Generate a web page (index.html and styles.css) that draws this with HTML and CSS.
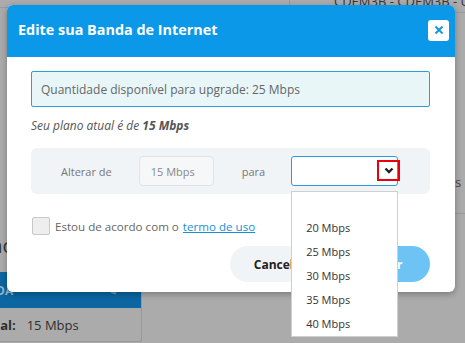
FILE: index.html
```html
<!DOCTYPE html>
<html lang="pt-BR">

<head>
    <meta charset="UTF-8">
    <meta name="viewport" content="width=device-width, initial-scale=1.0">
    <title>Banda de Internet</title>
    <link rel="stylesheet" href="styles.css">
</head>

<body>
    <div class="page">
        <div class="topo">
            <div class="topo-esq"></div>
            <div class="topo-dir">CDEM3B - CDEM3B - Universidade</div>
        </div>
        <div class="meio">
            <div class="coluna">
                <div class="titulo-fundo">Plano</div>
                <div class="card">
                    <div class="card-barra">
                        <span>BANDA</span>
                        <span class="lapis">&#9998;</span>
                    </div>
                    <div class="card-linha"><b>Atual:</b><span class="valor">15 Mbps</span></div>
                </div>
            </div>
            <div class="lado">
                <div class="lado-texto">s r</div>
                <div class="lado-linha"></div>
            </div>
        </div>
    </div>

    <div class="modal">
        <div class="modal-topo">
            <h1>Edite sua Banda de Internet</h1>
            <button class="fechar">
                <svg width="10" height="10" viewBox="0 0 10 10">
                    <path d="M1.5 1.5 L8.5 8.5 M8.5 1.5 L1.5 8.5" stroke="#1596e2" stroke-width="2" />
                </svg>
            </button>
        </div>
        <div class="modal-corpo">
            <div class="aviso">Quantidade disponível para upgrade: 25 Mbps</div>
            <p class="plano">Seu plano atual é de <b>15 Mbps</b></p>

            <div class="alterar">
                <span class="rotulo">Alterar de</span>
                <div class="campo">15 Mbps</div>
                <span class="rotulo para">para</span>
                <div class="seletor">
                    <span class="seta">
                        <svg width="10" height="7" viewBox="0 0 10 7">
                            <path d="M1.5 1.5 L5 5 L8.5 1.5" stroke="#222" stroke-width="2.4" fill="none" />
                        </svg>
                    </span>
                    <ul class="opcoes">
                        <li></li>
                        <li>20 Mbps</li>
                        <li>25 Mbps</li>
                        <li>30 Mbps</li>
                        <li>35 Mbps</li>
                        <li>40 Mbps</li>
                    </ul>
                </div>
            </div>

            <label class="acordo">
                <span class="caixa"></span>
                Estou de acordo com o <a href="#">termo de uso</a>
            </label>

            <div class="botoes">
                <button class="cancelar">Cancelar</button>
                <button class="salvar">Salvar</button>
            </div>
        </div>
    </div>
</body>

</html>
```

FILE: styles.css
```css
* {
    padding: 0;
    margin: 0;
    box-sizing: border-box;
}

body {
    background-color: #ababab;
    font-family: "Open Sans", sans-serif;
    width: 465px;
    height: 343px;
    overflow: hidden;
    position: relative;
}

/* pagina por tras do modal */

.page {
    color: #3a3a3a;
}

.topo {
    display: flex;
    height: 13px;
}

.topo-esq {
    width: 290px;
    height: 8px;
    border-bottom: 1px solid #9a9a9a;
    border-right: 1px solid #999;
}

.topo-dir {
    flex: 1;
    border-bottom: 1px solid #999;
    font-size: 13px;
    line-height: 13px;
    margin-top: -5px;
    padding-left: 44px;
    white-space: nowrap;
    overflow: hidden;
    color: #333;
}

.meio {
    display: flex;
    justify-content: space-between;
}

.coluna {
    width: 142px;
    padding-top: 219px;
}

.titulo-fundo {
    font-size: 20px;
    margin-left: -38px;
    color: #333;
    height: 40px;
}

.card {
    border-right: 1px solid #999;
    border-bottom: 1px solid #999;
    border-radius: 0 0 3px 0;
    height: 70px;
}

.card-barra {
    background-color: #0b66a1;
    height: 36px;
    display: flex;
    justify-content: space-between;
    align-items: center;
    color: #8fb4cc;
    font-size: 12px;
    font-weight: bold;
    padding: 0 24px 0 0;
    margin-left: -30px;
}

.lapis {
    color: #7e99ad;
}

.card-linha {
    font-size: 13px;
    color: #2f2f2f;
    padding-top: 8px;
    margin-left: -23px;
}

.valor {
    margin-left: 11px;
}

.lado {
    width: 10px;
    padding-top: 160px;
}

.lado-texto {
    font-size: 13px;
    white-space: nowrap;
    color: #444;
    height: 40px;
}

.lado-linha {
    border-top: 1px solid #999;
}

/* modal */

.modal {
    position: absolute;
    left: 7px;
    top: 5px;
    width: 448px;
    height: 287px;
    background-color: #fff;
    border-radius: 6px;
    box-shadow: 0 2px 6px rgba(0, 0, 0, 0.3);
}

.modal-topo {
    background-color: #0b98e8;
    height: 52px;
    border-radius: 6px 6px 0 0;
    display: flex;
    justify-content: space-between;
    align-items: center;
    padding: 0 6px 0 11px;
}

.modal-topo h1 {
    color: #fff;
    font-size: 14.4px;
    font-weight: bold;
    margin-top: -3px;
}

.fechar {
    width: 21px;
    height: 21px;
    border: 0;
    border-radius: 3px;
    background-color: #fff;
    display: flex;
    align-items: center;
    justify-content: center;
    margin-top: -2px;
}

.modal-corpo {
    padding: 14px 25px 0 24px;
}

.aviso {
    height: 36px;
    background-color: #e8f6f8;
    border: 1px solid #2d9fd8;
    border-radius: 2px;
    color: #666;
    font-size: 12px;
    display: flex;
    align-items: center;
    padding-left: 9px;
}

.plano {
    font-size: 12px;
    font-style: italic;
    color: #555;
    margin-top: 11px;
    line-height: 16px;
}

.alterar {
    background-color: #f1f4f7;
    border-radius: 6px;
    height: 46px;
    margin-top: 14px;
    display: flex;
    align-items: center;
    padding-left: 30px;
}

.rotulo {
    font-size: 11px;
    color: #777;
}

.campo {
    width: 75px;
    height: 30px;
    border: 1px solid #e0e4e8;
    border-radius: 4px;
    background-color: #f5f7f9;
    margin-left: 27px;
    font-size: 11px;
    color: #888;
    display: flex;
    align-items: center;
    padding-left: 11px;
}

.para {
    margin-left: 28px;
}

.seletor {
    position: relative;
    width: 107px;
    height: 30px;
    margin-left: 26px;
    border: 1px solid #2a9be2;
    border-radius: 3px;
    background-color: #fff;
}

.seta {
    position: absolute;
    right: -3px;
    top: 3px;
    width: 23px;
    height: 21px;
    border: 2px solid #e8000b;
    display: flex;
    align-items: center;
    justify-content: center;
}

.opcoes {
    position: absolute;
    left: -1px;
    top: 34px;
    width: 107px;
    list-style: none;
    background-color: #fff;
    border: 1px solid #cfcfcf;
}

.opcoes li {
    height: 24px;
    line-height: 24px;
    font-size: 11px;
    color: #333;
    padding-left: 14px;
}

.acordo {
    display: flex;
    align-items: center;
    margin-top: 23px;
    margin-left: 1px;
    font-size: 11.6px;
    color: #666;
}

.caixa {
    width: 18px;
    height: 18px;
    background-color: #eee;
    border: 1px solid #c8c8c8;
    border-radius: 2px;
    margin-right: 5px;
}

.acordo a {
    color: #1a8fd6;
    margin-left: 4px;
}

.botoes {
    display: flex;
    justify-content: flex-end;
    gap: 8px;
    margin-top: 11px;
}

.botoes button {
    height: 36px;
    border: 0;
    border-radius: 18px;
    font-family: "Open Sans", sans-serif;
    font-size: 12px;
    font-weight: bold;
    cursor: pointer;
}

.cancelar {
    width: 100px;
    background-color: #f1f4f7;
    color: #222;
}

.salvar {
    width: 92px;
    background-color: #6cc3f4;
    color: #fff;
}
```
